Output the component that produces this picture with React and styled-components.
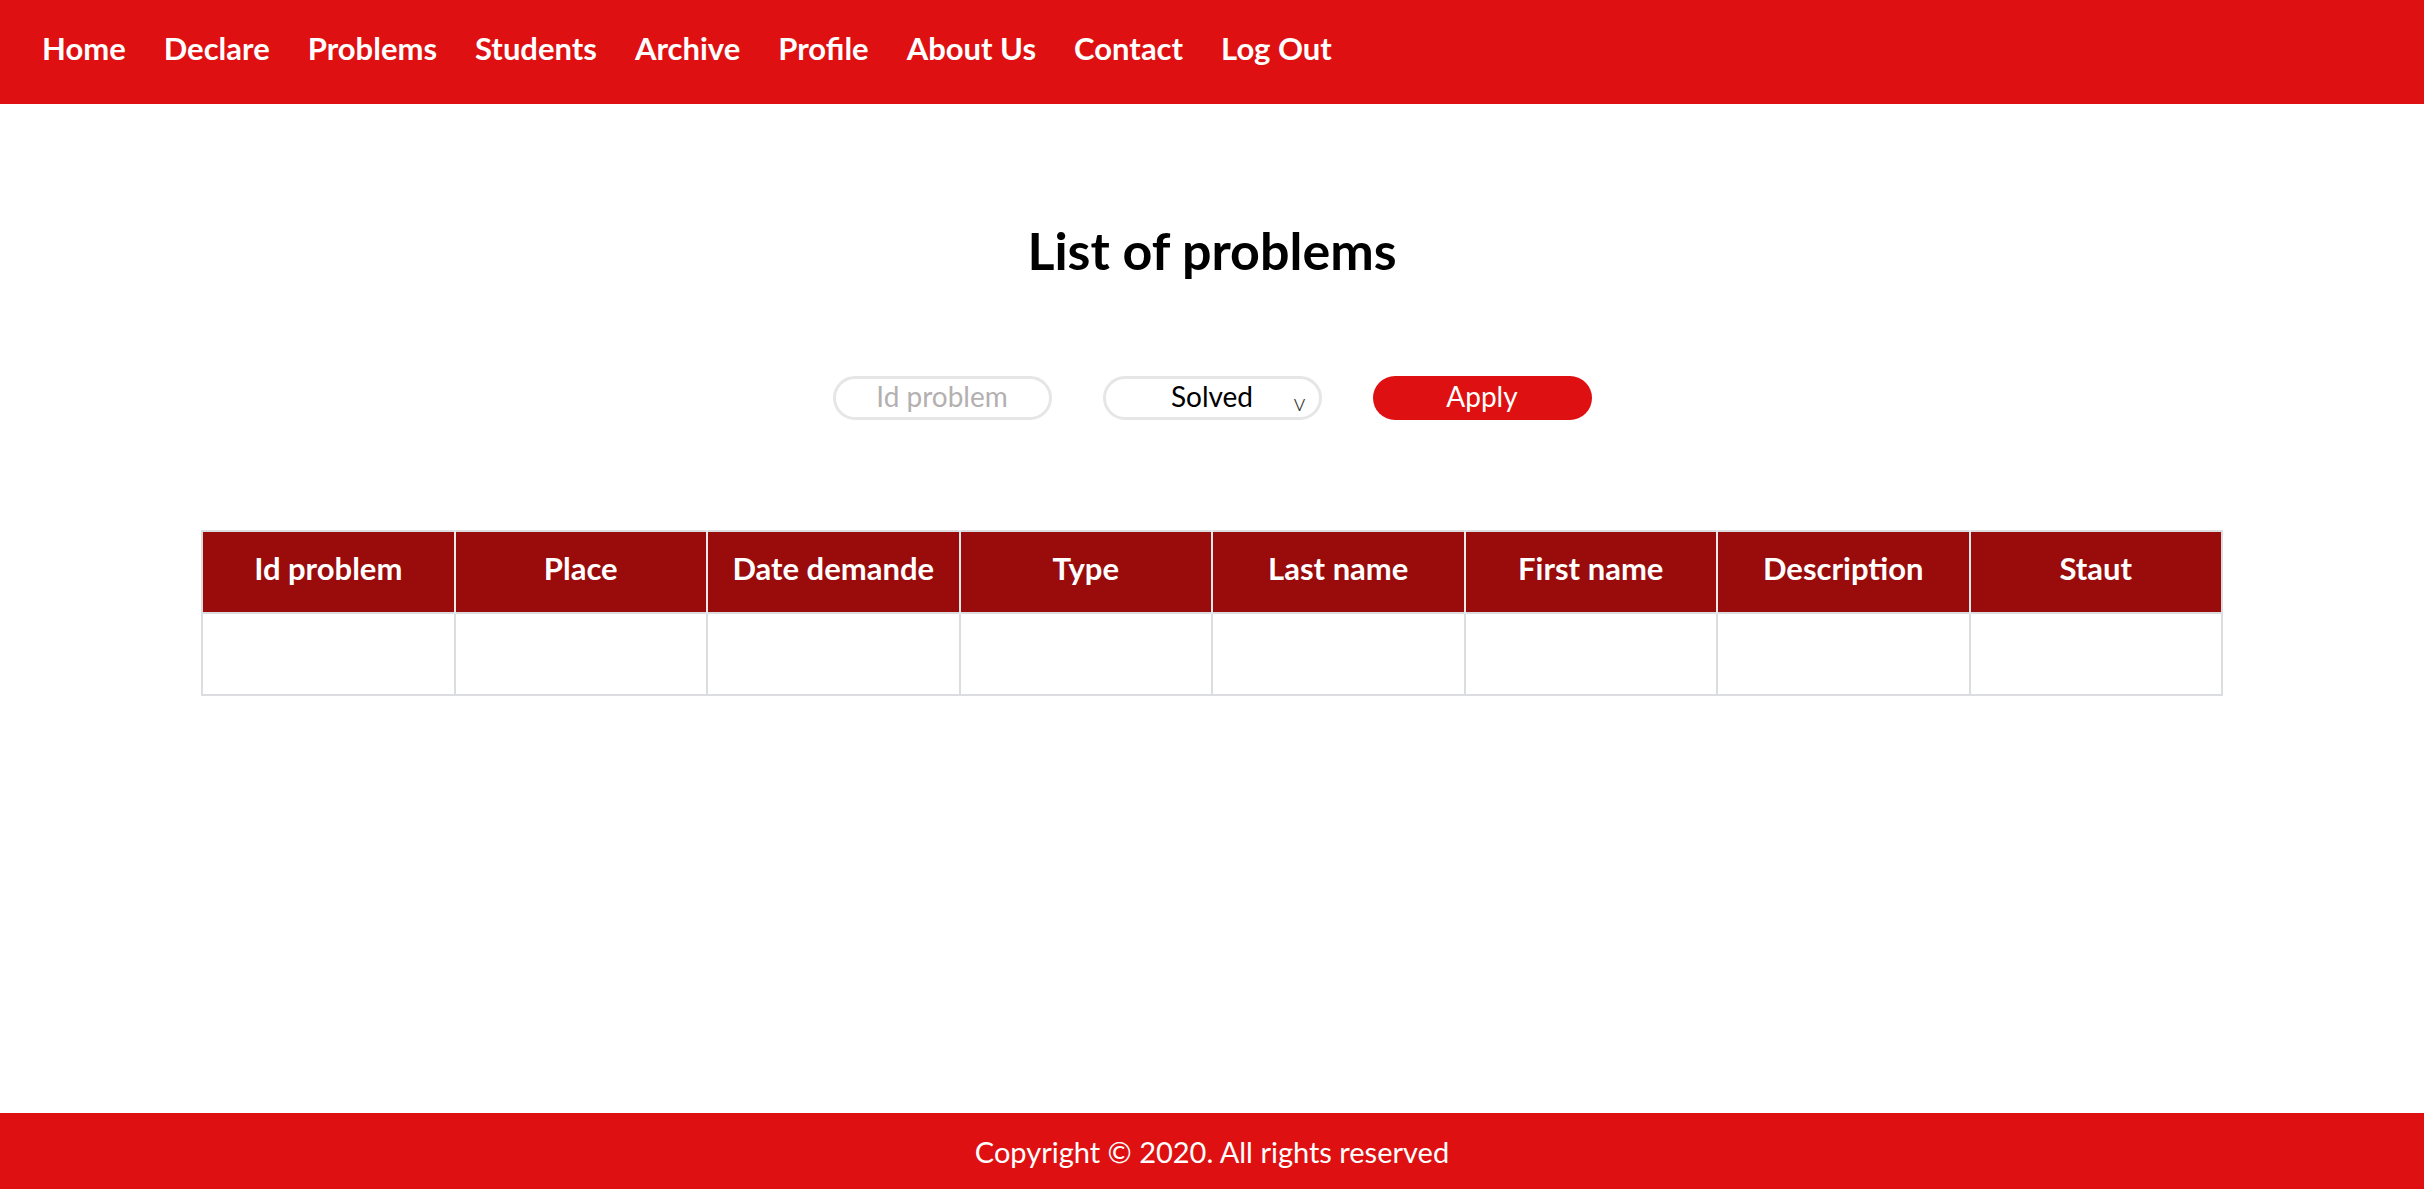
import React, { useState } from 'react';
import styled, { createGlobalStyle } from 'styled-components';

const GlobalStyle = createGlobalStyle`
  html, body {
    margin: 0;
    padding: 0;
    background: #fff;
    font-family: Lato, 'Noto Sans', sans-serif;
  }
  * { box-sizing: border-box; }
`;

const Page = styled.div`
  min-height: 100vh;
  display: flex;
  flex-direction: column;
`;

const Header = styled.header`
  height: 104px;
  background-color: #df1011;
  display: flex;
  align-items: center;
  padding: 0 0 9px 42px;
`;

const Nav = styled.nav`
  display: flex;
  align-items: center;
  gap: 38px;
`;

const NavLink = styled.a`
  color: #fff;
  font-weight: 700;
  font-size: 31px;
  text-decoration: none;
  cursor: pointer;
`;

const Main = styled.main`
  flex: 1;
  display: flex;
  flex-direction: column;
  align-items: center;
  padding: 0 201px;
`;

const Title = styled.h1`
  margin: 116px 0 0;
  font-size: 52px;
  font-weight: 700;
  color: #000;
  line-height: 60px;
`;

const Filters = styled.div`
  display: flex;
  gap: 51px;
  margin-top: 96px;
`;

const Pill = styled.div`
  position: relative;
  width: 219px;
  height: 44px;
  border-radius: 22px;
  border: 3px solid #e6e6e6;
  background: #fff;
  display: flex;
  align-items: center;
  justify-content: center;
  padding-bottom: 4px;
`;

const Input = styled.input`
  border: none;
  outline: none;
  width: 100%;
  padding: 0;
  text-align: center;
  font-family: Lato, sans-serif;
  font-size: 28px;
  color: #333;
  background: transparent;

  &::placeholder {
    color: #b4b0b0;
  }
`;

const SelectText = styled.span`
  font-size: 28px;
  color: #000;
`;

const Caret = styled.span`
  position: absolute;
  right: 13px;
  top: 8px;
  font-size: 24px;
  font-weight: 300;
  color: #333;
`;

const Button = styled.button`
  width: 219px;
  height: 44px;
  border-radius: 22px;
  border: none;
  padding: 0 0 4px;
  background-color: #df1011;
  color: #fff;
  font-family: Lato, sans-serif;
  font-size: 28px;
  cursor: pointer;
`;

const Table = styled.table`
  margin-top: 110px;
  width: 100%;
  border-collapse: collapse;
  table-layout: fixed;
  border: 2px solid #dcdde0;
`;

const Th = styled.th`
  height: 82px;
  padding: 0 0 8px;
  background-color: #9a0b0b;
  color: #fff;
  font-size: 31px;
  font-weight: 700;
  border-left: 2px solid #e8e8ea;
  &:first-child { border-left: none; }
`;

const Td = styled.td`
  height: 82px;
  border: 2px solid #dcdde0;
`;

const Footer = styled.footer`
  height: 76px;
  background-color: #df1011;
  color: #fff;
  display: flex;
  align-items: center;
  justify-content: center;
  font-size: 29px;
`;

const links = ['Home', 'Declare', 'Problems', 'Students', 'Archive', 'Profile', 'About Us', 'Contact', 'Log Out'];
const columns = ['Id problem', 'Place', 'Date demande', 'Type', 'Last name', 'First name', 'Description', 'Staut'];

const App = () => {
  const [id, setId] = useState('');

  return (
    <Page>
      <GlobalStyle />
      <Header>
        <Nav>
          {links.map((l) => (
            <NavLink key={l}>{l}</NavLink>
          ))}
        </Nav>
      </Header>
      <Main>
        <Title>List of problems</Title>
        <Filters>
          <Pill>
            <Input value={id} onChange={(e) => setId(e.target.value)} placeholder="Id problem" />
          </Pill>
          <Pill>
            <SelectText>Solved</SelectText>
            <Caret>v</Caret>
          </Pill>
          <Button>Apply</Button>
        </Filters>
        <Table>
          <thead>
            <tr>
              {columns.map((c) => (
                <Th key={c}>{c}</Th>
              ))}
            </tr>
          </thead>
          <tbody>
            <tr>
              {columns.map((c) => (
                <Td key={c} />
              ))}
            </tr>
          </tbody>
        </Table>
      </Main>
      <Footer>Copyright © 2020. All rights reserved</Footer>
    </Page>
  );
};

export default App;
